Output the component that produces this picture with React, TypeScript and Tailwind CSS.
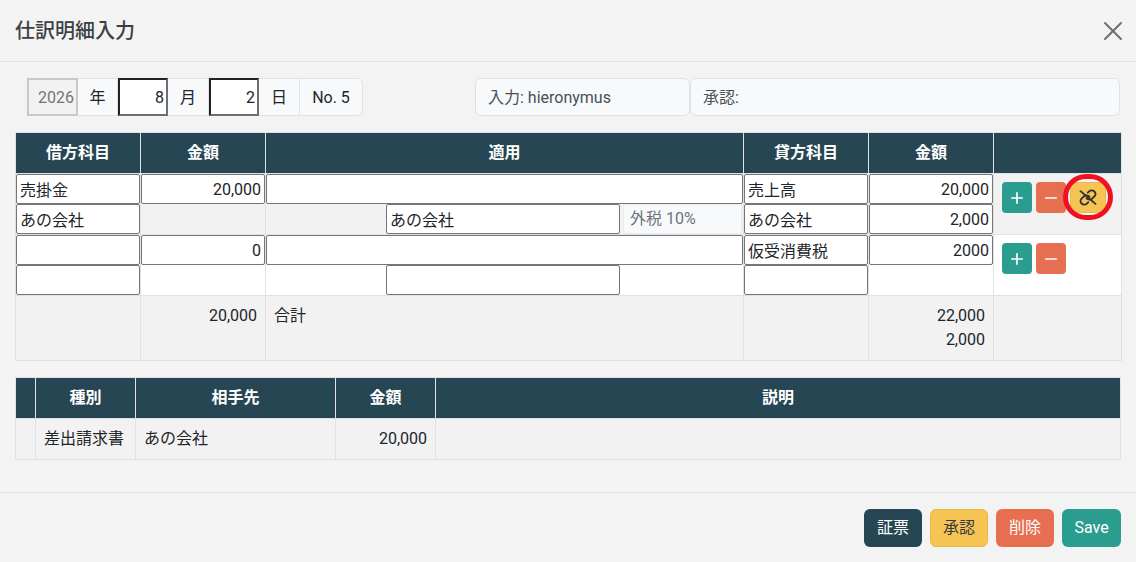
import React from 'react';
import { Plus, Minus, X } from 'lucide-react';

const inputBase = 'block w-full h-[30px] bg-white px-[3px] text-[16px] text-[#212529] border border-[#767676] rounded-[2px] outline-none';

function TextBox({ value, right }: { value?: string; right?: boolean }) {
    return <input readOnly value={value ?? ''} className={`${inputBase} ${right ? 'text-right' : ''}`} />;
}

function AddOn({ children, w }: { children: React.ReactNode; w: string }) {
    return (
        <span className={`${w} h-full flex items-center justify-center pt-px bg-[#f8f9fa] border border-l-0 border-[#dee2e6] text-[16px] text-[#212529]`}>
            {children}
        </span>
    );
}

function SmallButton({ color, children }: { color: string; children: React.ReactNode }) {
    return (
        <button className={`w-[30px] h-[31px] rounded flex items-center justify-center text-white ${color}`}>
            {children}
        </button>
    );
}

// chain with a slash through it, lucide's link paths are the closest to the original knot shape
function UnlinkIcon() {
    return (
        <svg width="18" height="17" viewBox="0 0 24 24" preserveAspectRatio="none" fill="none" stroke="currentColor" strokeWidth="2.6" strokeLinecap="round" strokeLinejoin="round">
            <path d="M10 13a5 5 0 0 0 7.54.54l3-3a5 5 0 0 0-7.07-7.07l-1.72 1.71" />
            <path d="M14 11a5 5 0 0 0-7.54-.54l-3 3a5 5 0 0 0 7.07 7.07l1.71-1.71" />
            <path d="M2 3l20 18" />
        </svg>
    );
}

const th = 'border border-[#dee2e6] font-bold text-[16px] text-white text-center align-middle';
const td = 'border border-[#dee2e6] p-0 align-top';
const tdMid = 'border border-[#dee2e6] align-middle px-2 text-[16px]';

function EntryRow({ striped, debit, amount, debitSub, credit, creditAmount, creditSub, tax, link }: {
    striped: boolean;
    debit: string;
    amount: string;
    debitSub: string;
    credit: string;
    creditAmount: string;
    creditSub: string;
    tax?: string;
    link?: boolean;
}) {
    return (
        <tr className={striped ? 'bg-[#f2f2f2]' : 'bg-white'}>
            <td className={td}>
                <TextBox value={debit} />
                <TextBox value={debitSub} />
            </td>
            <td className={td}>
                <TextBox value={amount} right />
            </td>
            <td className={td}>
                <TextBox />
                <div className="flex">
                    <div className="w-[120px] shrink-0"></div>
                    <div className="w-[234px] shrink-0"><TextBox value={debitSub} /></div>
                    {tax && (
                        <div className="flex-1 h-[30px] ml-[3px] mr-px flex items-center px-[6px] bg-[#f8f9fa] border border-[#e9ecef] rounded text-[16px] text-[#6c757d]">
                            {tax}
                        </div>
                    )}
                </div>
            </td>
            <td className={td}>
                <TextBox value={credit} />
                <TextBox value={creditSub} />
            </td>
            <td className={td}>
                <TextBox value={creditAmount} right />
                {tax && <TextBox value="2,000" right />}
            </td>
            <td className={`${td} pl-2 pt-2`}>
                <div className="flex gap-1">
                    <SmallButton color="bg-[#2a9d8f]"><Plus size={18} strokeWidth={2.2} /></SmallButton>
                    <SmallButton color="bg-[#e76f51]"><Minus size={18} strokeWidth={2.2} /></SmallButton>
                    {link && (
                        <span className="relative">
                            <button className="w-[36px] h-[31px] rounded flex items-center justify-center bg-[#f6c453] border border-[#e9b949] text-[#333]">
                                <UnlinkIcon />
                            </button>
                            <span className="absolute -left-[7px] -top-[8px] w-[50px] h-[46px] rounded-full border-[5px] border-[#ee1122]"></span>
                        </span>
                    )}
                </div>
            </td>
        </tr>
    );
}

export default function App() {
    return (
        <div className="w-[1136px] h-[562px] overflow-hidden bg-[#f3f3f3] text-[#212529] text-[16px]" style={{ fontFamily: 'Roboto, "Noto Sans CJK JP", sans-serif' }}>
            <div className="h-[62px] flex items-center justify-between pl-[15px] pr-[7px] border-b border-[#dee2e6]">
                <h1 className="text-[20px] font-medium text-[#3d4043]">仕訳明細入力</h1>
                <X size={32} strokeWidth={1.5} className="text-[#6b6f73]" />
            </div>

            <div className="pt-4 px-[15px]">
                <div className="flex h-[38px] ml-3">
                    <div className="flex h-full w-[336px]">
                        <input readOnly value="2026" className="w-[51px] h-full bg-[#f2f2f2] border-2 border-[#c8c8c8] text-right pr-[2px] text-[16px] text-[#757575] outline-none" />
                        <AddOn w="w-[40px]">年</AddOn>
                        <input readOnly value="8" className="w-[50px] h-full bg-white border-2 border-t-[#222] border-l-[#222] border-r-[#6e6e6e] border-b-[#6e6e6e] text-right pr-[2px] text-[16px] outline-none" />
                        <AddOn w="w-[41px]">月</AddOn>
                        <input readOnly value="2" className="w-[50px] h-full bg-white border-2 border-t-[#222] border-l-[#222] border-r-[#6e6e6e] border-b-[#6e6e6e] text-right pr-[2px] text-[16px] outline-none" />
                        <AddOn w="w-[41px]">日</AddOn>
                        <span className="w-[63px] h-full flex items-center justify-center pt-px bg-[#f8f9fa] border border-l-0 border-[#dee2e6] rounded-r-md text-[16px]">No. 5</span>
                    </div>
                    <div className="flex h-full ml-[112px] flex-1 mr-px">
                        <div className="w-[215px] flex items-center px-3 pt-px bg-[#f8f9fa] border border-[#dee2e6] rounded-md text-[#495057]">入力: hieronymus</div>
                        <div className="flex-1 flex items-center px-3 pt-px bg-[#f8f9fa] border border-[#dee2e6] rounded-md text-[#495057]">承認:</div>
                    </div>
                </div>

                <table className="mt-4 w-[1106px] table-fixed border-collapse">
                    <colgroup>
                        <col className="w-[125px]" />
                        <col className="w-[125px]" />
                        <col className="w-[478px]" />
                        <col className="w-[125px]" />
                        <col className="w-[125px]" />
                        <col className="w-[128px]" />
                    </colgroup>
                    <thead>
                        <tr className="h-[41px] bg-[#264653]">
                            <th className={th}>借方科目</th>
                            <th className={th}>金額</th>
                            <th className={th}>適用</th>
                            <th className={th}>貸方科目</th>
                            <th className={th}>金額</th>
                            <th className={th}></th>
                        </tr>
                    </thead>
                    <tbody>
                        <EntryRow striped debit="売掛金" amount="20,000" debitSub="あの会社" credit="売上高" creditAmount="20,000" creditSub="あの会社" tax="外税 10%" link />
                        <EntryRow striped={false} debit="" amount="0" debitSub="" credit="仮受消費税" creditAmount="2000" creditSub="" />
                        <tr className="h-[65px] bg-[#f2f2f2] align-top">
                            <td className={td}></td>
                            <td className={`${td} text-right pt-2 pr-2`}>20,000</td>
                            <td className={`${td} pt-2 pl-2`}>合計</td>
                            <td className={td}></td>
                            <td className={`${td} text-right pt-2 pr-2 leading-6`}>22,000<br />2,000</td>
                            <td className={td}></td>
                        </tr>
                    </tbody>
                </table>

                <table className="mt-4 w-[1106px] table-fixed border-collapse">
                    <colgroup>
                        <col className="w-[20px]" />
                        <col className="w-[100px]" />
                        <col className="w-[200px]" />
                        <col className="w-[100px]" />
                        <col />
                    </colgroup>
                    <thead>
                        <tr className="h-[41px] bg-[#264653]">
                            <th className={th}></th>
                            <th className={th}>種別</th>
                            <th className={th}>相手先</th>
                            <th className={th}>金額</th>
                            <th className={th}>説明</th>
                        </tr>
                    </thead>
                    <tbody>
                        <tr className="h-[41px] bg-[#f2f2f2]">
                            <td className={td}></td>
                            <td className={`${tdMid} whitespace-nowrap`}>差出請求書</td>
                            <td className={tdMid}>あの会社</td>
                            <td className={`${tdMid} text-right`}>20,000</td>
                            <td className={td}></td>
                        </tr>
                    </tbody>
                </table>
            </div>

            <div className="mt-[32px] h-[70px] border-t border-[#dee2e6] flex justify-end items-center gap-2 pr-[15px] pt-px">
                <button className="w-[58px] h-[38px] rounded-md bg-[#264653] text-white text-[16px]">証票</button>
                <button className="w-[58px] h-[38px] rounded-md bg-[#f6c453] border border-[#e9b949] text-[#343a40] text-[16px]">承認</button>
                <button className="w-[58px] h-[38px] rounded-md bg-[#e76f51] text-white text-[16px]">削除</button>
                <button className="w-[59px] h-[38px] rounded-md bg-[#2a9d8f] text-white text-[16px]">Save</button>
            </div>
        </div>
    );
}
